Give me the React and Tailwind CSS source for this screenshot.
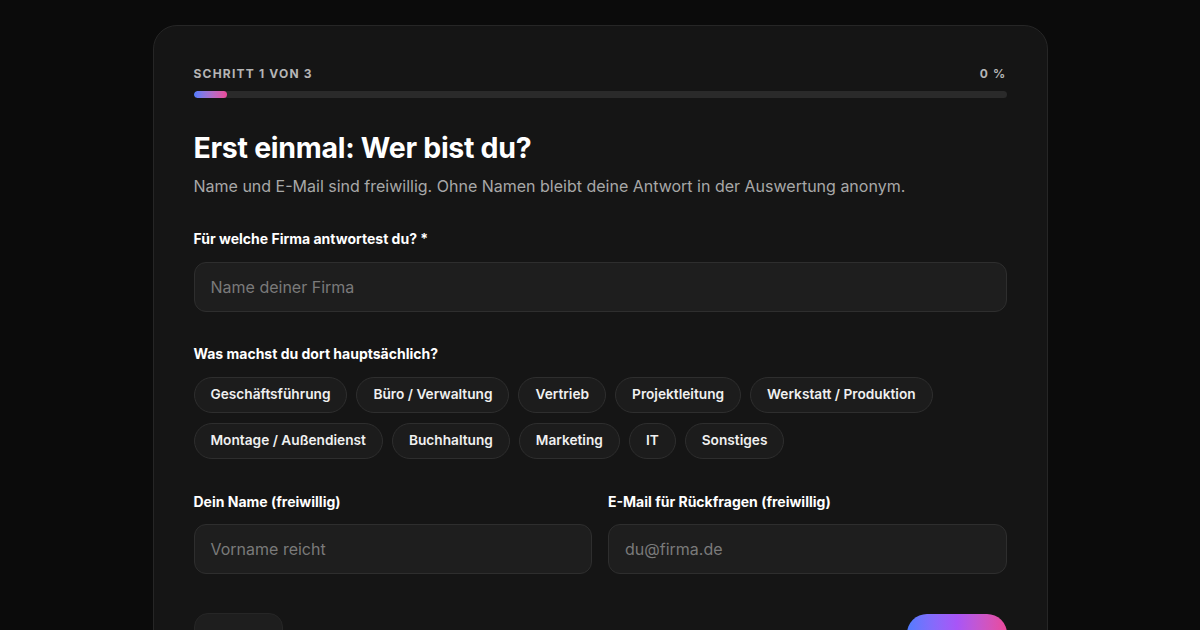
import React from "react";

const roles1 = ["Geschäftsführung", "Büro / Verwaltung", "Vertrieb", "Projektleitung", "Werkstatt / Produktion"];
const roles2 = ["Montage / Außendienst", "Buchhaltung", "Marketing", "IT", "Sonstiges"];

function Chip({ children }) {
  return (
    <button className="h-9 px-4 rounded-full bg-[#1c1c1c] border border-[#2e2e2e] text-[13.7px] font-semibold text-[#f0f0f0] leading-none">
      {children}
    </button>
  );
}

function Input({ placeholder }) {
  return (
    <div className="h-[50px] w-full rounded-xl bg-[#1e1e1e] border border-[#2e2e2e] flex items-center px-4 text-[16px] text-[#7a7a7a]">
      {placeholder}
    </div>
  );
}

export default function App() {
  return (
    <div
      className="w-[1200px] h-[630px] bg-[#0b0b0b] overflow-hidden flex justify-center pt-[25px]"
      style={{ fontFamily: "Inter, 'Noto Sans', sans-serif" }}
    >
      <div className="w-[895px] h-[700px] rounded-[24px] bg-[#151515] border border-[#262626] px-10 pt-10 shrink-0">
        <div className="flex justify-between items-center h-4 text-[12px] font-bold tracking-[0.1em] text-[#b5b5b5]">
          <span>SCHRITT 1 VON 3</span>
          <span>0 %</span>
        </div>
        <div className="mt-[9px] h-[7px] rounded-full bg-[#2a2a2a] overflow-hidden">
          <div className="h-full w-[33px] rounded-full bg-gradient-to-r from-[#4f7cff] to-[#ec4899]" />
        </div>

        <h1 className="mt-[34px] text-[28.5px] leading-[32px] font-bold tracking-[-0.01em] text-white">
          Erst einmal: Wer bist du?
        </h1>
        <p className="mt-[11px] text-[16px] leading-[22px] text-[#a8a8a8]">
          Name und E-Mail sind freiwillig. Ohne Namen bleibt deine Antwort in der Auswertung anonym.
        </p>

        <div className="mt-[33px] text-[14px] leading-[18px] font-bold text-white">Für welche Firma antwortest du? *</div>
        <div className="mt-[14px]">
          <Input placeholder="Name deiner Firma" />
        </div>

        <div className="mt-[33px] text-[14px] leading-[18px] font-bold text-white">Was machst du dort hauptsächlich?</div>
        <div className="mt-[14px] flex flex-col gap-[10px]">
          <div className="flex gap-[9px]">
            {roles1.map((r) => (
              <Chip key={r}>{r}</Chip>
            ))}
          </div>
          <div className="flex gap-[9px]">
            {roles2.map((r) => (
              <Chip key={r}>{r}</Chip>
            ))}
          </div>
        </div>

        <div className="mt-[34px] grid grid-cols-2 gap-4">
          <div>
            <div className="text-[14px] leading-[18px] font-bold text-white">Dein Name (freiwillig)</div>
            <div className="mt-[13px]">
              <Input placeholder="Vorname reicht" />
            </div>
          </div>
          <div>
            <div className="text-[14px] leading-[18px] font-bold text-white">E-Mail für Rückfragen (freiwillig)</div>
            <div className="mt-[13px]">
              <Input placeholder="du@firma.de" />
            </div>
          </div>
        </div>

        <div className="mt-[39px] flex justify-between items-start">
          <button className="h-[60px] w-[89px] rounded-[14px] bg-[#1e1e1e] border border-[#262626] text-[14px] font-semibold text-[#d0d0d0]">
            Zurück
          </button>
          <button className="mt-px h-[60px] w-[100px] rounded-[20px] bg-gradient-to-r from-[#4f7cff] via-[#a855f7] to-[#ec4899] text-[14px] font-semibold text-white">
            Weiter
          </button>
        </div>
      </div>
    </div>
  );
}
